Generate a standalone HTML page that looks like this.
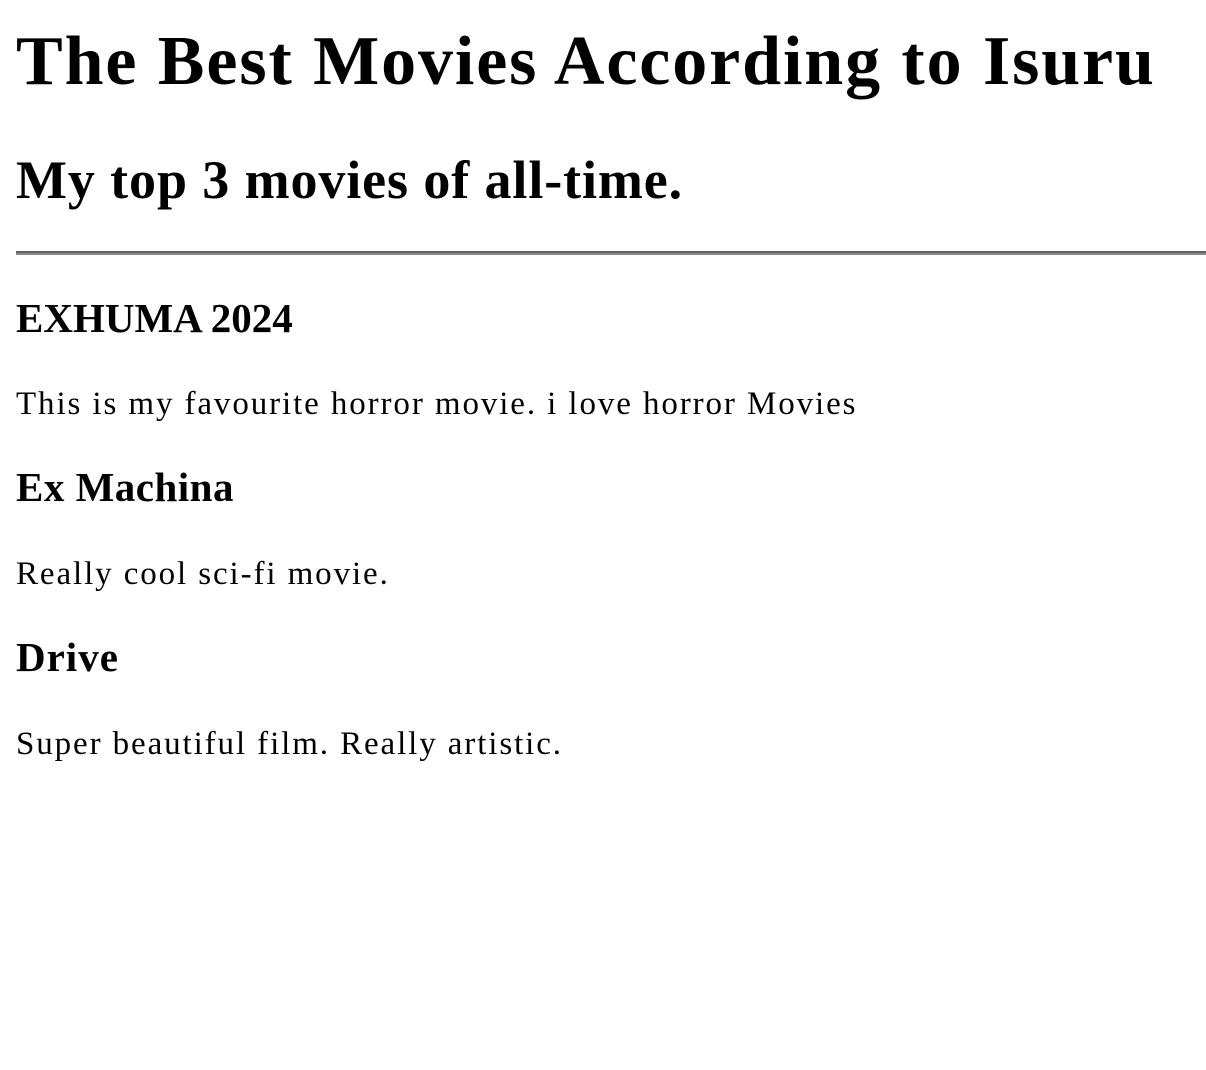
<!DOCTYPE html>
<html><head><meta charset="utf-8"><style>
html,body{margin:0;padding:0;background:#fff;width:1206px;height:1070px;overflow:hidden}
body{position:relative;font-family:"Liberation Serif",serif;color:#000}
.t{position:absolute;left:16px;line-height:1;white-space:nowrap;margin:0}
.b{font-weight:bold}
.p{font-size:33px;letter-spacing:1.9px}
hr{position:absolute;left:16px;top:251px;width:1190px;margin:0;border:0;border-top:2px solid #666;border-bottom:2px solid #888;height:0}
</style></head><body>
<div class="t b" style="top:27px;font-size:70px;letter-spacing:1.9px">The Best Movies According to Isuru</div>
<div class="t b" style="top:153px;font-size:54px;letter-spacing:0.9px">My top 3 movies of all-time.</div>
<hr>
<div class="t b" style="top:298px;font-size:41px">EXHUMA 2024</div>
<div class="t p" style="top:388px">This is my favourite horror movie. i love horror Movies</div>
<div class="t b" style="top:467px;font-size:41px;letter-spacing:0.5px">Ex Machina</div>
<div class="t p" style="top:558px">Really cool sci-fi movie.</div>
<div class="t b" style="top:637px;font-size:41px;letter-spacing:1px">Drive</div>
<div class="t p" style="top:728px">Super beautiful film. Really artistic.</div>
</body></html>
